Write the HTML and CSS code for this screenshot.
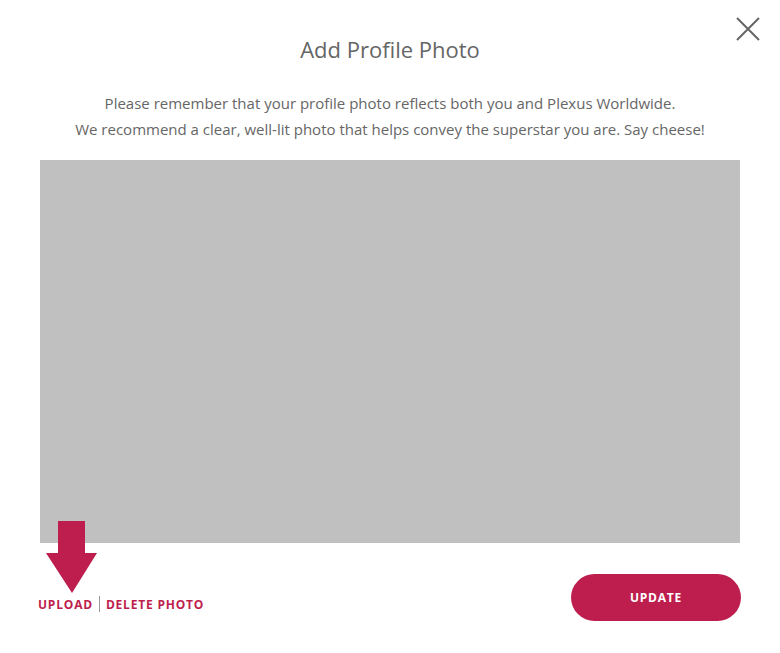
FILE: index.html
```html
<!DOCTYPE html>
<html lang="en">
<head>
    <meta charset="UTF-8">
    <meta name="viewport" content="width=device-width, initial-scale=1.0">
    <title>Add Profile Photo</title>
    <link rel="stylesheet" href="styles.css">
</head>
<body>
    <div class="modal">
        <button class="close" aria-label="Close">
            <svg width="24" height="24" viewBox="0 0 24 24"><path d="M1 1L23 23M23 1L1 23" stroke="#666" stroke-width="2" fill="none"/></svg>
        </button>
        <h1 class="title">Add Profile Photo</h1>
        <p class="intro">Please remember that your profile photo reflects both you and Plexus Worldwide.<br>We recommend a clear, well-lit photo that helps convey the superstar you are. Say cheese!</p>

        <div class="photo"></div>

        <div class="actions">
            <div class="links">
                <svg class="arrow" width="52" height="74" viewBox="0 0 52 74"><path d="M12 0H39V32H51L26 72L0 32H12Z" fill="#be1e4d"/></svg>
                <a href="#" class="link">UPLOAD</a>
                <span class="sep"></span>
                <a href="#" class="link">DELETE PHOTO</a>
            </div>
            <button class="update">UPDATE</button>
        </div>
    </div>
</body>
</html>
```

FILE: styles.css
```css
body {
    margin: 0;
    background: #ffffff;
    font-family: "Open Sans", Arial, sans-serif;
    color: #666;
}
.modal {
    position: relative;
    width: 780px;
    height: 653px;
    padding: 35px 40px 0;
    box-sizing: border-box;
}
.close {
    position: absolute;
    top: 17px;
    right: 20px;
    background: none;
    border: 0;
    padding: 0;
    cursor: pointer;
}
.title {
    margin: 0;
    text-align: center;
    font-size: 22px;
    font-weight: 400;
    line-height: 28px;
    color: #666;
}
.intro {
    margin: 27px 0 18px;
    text-align: center;
    font-size: 15px;
    line-height: 26px;
    color: #666;
}
.photo {
    height: 383px;
    background: #c0c0c0;
}
.actions {
    display: flex;
    justify-content: space-between;
    align-items: center;
    margin: 31px -1px 0 -2px;
}
.links {
    position: relative;
    display: flex;
    align-items: center;
    gap: 6px;
    margin-top: 13px;
}
.arrow {
    position: absolute;
    left: 8px;
    bottom: 18px;
}
.link {
    color: #be1e4d;
    font-weight: 700;
    font-size: 12px;
    letter-spacing: 0.8px;
    text-decoration: none;
}
.sep {
    width: 1px;
    height: 16px;
    background: #999;
}
.update {
    width: 170px;
    height: 47px;
    border: 0;
    border-radius: 24px;
    background: #be1e4d;
    color: #fff;
    font-family: "Open Sans", Arial, sans-serif;
    font-weight: 700;
    font-size: 12px;
    letter-spacing: 0.8px;
    cursor: pointer;
}
```
